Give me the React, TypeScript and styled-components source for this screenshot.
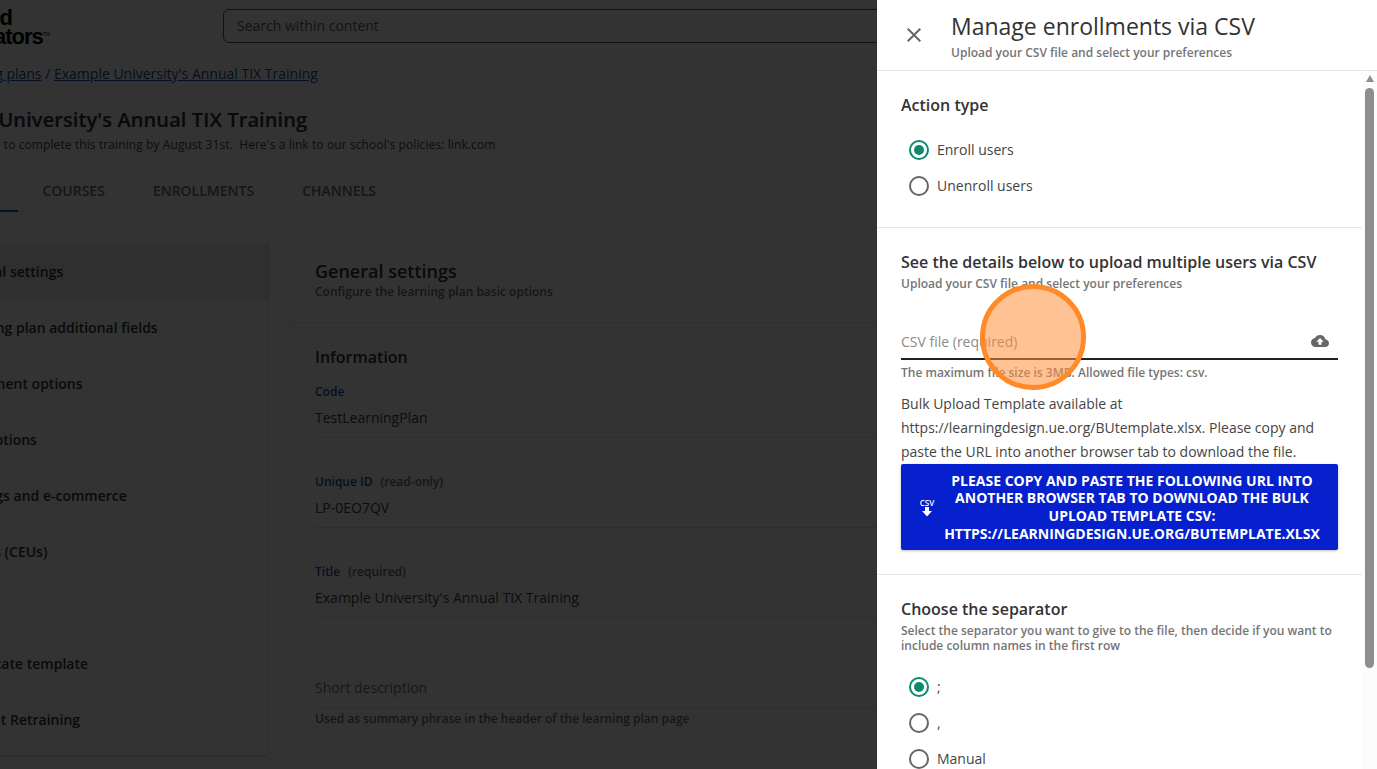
import React from "react";
import styled, { createGlobalStyle } from "styled-components";

const Global = createGlobalStyle`
  html, body { margin: 0; padding: 0; height: 100%; background: #fff; }
  body { font-family: "Open Sans", "Noto Sans", sans-serif; color: #333; overflow: hidden; }
  #root { height: 100%; }
  * { box-sizing: border-box; }
`;

const Viewport = styled.div`
  position: relative;
  width: 1377px;
  height: 769px;
  overflow: hidden;
`;

const Page = styled.div`
  width: 1500px;
  margin-left: -92px;
`;

const TopBar = styled.header`
  height: 51px;
  display: flex;
  align-items: flex-start;
`;

const Logo = styled.div`
  width: 315px;
  flex: none;
  padding-top: 8px;
  display: flex;
  flex-direction: column;
  align-items: flex-end;
  padding-right: 173px;
  font-family: "Liberation Sans", Arial, sans-serif;
  font-weight: 700;
  font-size: 22px;
  line-height: 19px;
  letter-spacing: -1px;
  color: #000;
`;

const LogoLine = styled.span<{ $inset?: number }>`
  white-space: nowrap;
  margin-right: ${(p) => p.$inset ?? 0}px;
`;

const LogoMark = styled.sup`
  font-size: 5px;
  line-height: 0;
  letter-spacing: 0;
  font-weight: 400;
`;

const Search = styled.div`
  margin-top: 9px;
  width: 1000px;
  height: 34px;
  border: 1px solid #555;
  border-radius: 6px;
  padding-left: 13px;
  font-size: 14px;
  line-height: 32px;
  color: #666;
`;

const Breadcrumb = styled.nav`
  padding: 13px 0 0 22px;
  height: 55px;
  font-size: 14px;
  line-height: 20px;
  color: #444;
`;

const Crumb = styled.a`
  color: #1553a5;
  text-decoration: underline;
`;

const Heading = styled.h1`
  margin: 0;
  padding-left: 2px;
  font-size: 20px;
  line-height: 28px;
  font-weight: 600;
  letter-spacing: 0.1px;
  color: #333;
  -webkit-text-stroke: 0.2px #333;
`;

const Lead = styled.p`
  margin: 2px 0 0;
  padding-left: 10px;
  height: 34px;
  font-size: 12px;
  line-height: 18px;
  letter-spacing: 0.1px;
  color: #444;
`;

const Tabs = styled.div`
  display: flex;
  align-items: stretch;
  height: 42px;
  margin-left: -2px;
  border-top: 1px solid #e8e8e8;
  border-bottom: 1px solid #e8e8e8;
`;

const Tab = styled.div<{ $active?: boolean }>`
  padding: 0 24px;
  font-size: 14px;
  font-weight: 600;
  line-height: 39px;
  color: #707070;
  text-transform: uppercase;
  border-bottom: 2px solid ${(p) => (p.$active ? "#0465ac" : "transparent")};
  height: 41px;
`;

const Columns = styled.div`
  display: flex;
  align-items: flex-start;
  gap: 23px;
  padding-top: 24px;
`;

const Side = styled.aside`
  width: 360px;
  flex: none;
  padding: 8px 0 7px;
  box-shadow: 0 1px 3px rgba(0, 0, 0, 0.2);
`;

const SideItem = styled.div<{ $active?: boolean }>`
  height: 56px;
  padding-left: 45px;
  font-size: 14px;
  font-weight: 600;
  line-height: 56px;
  color: #333;
  white-space: nowrap;
  background: ${(p) => (p.$active ? "#ececec" : "transparent")};
`;

const Main = styled.main`
  flex: 1;
  min-width: 0;
  box-shadow: 0 1px 3px rgba(0, 0, 0, 0.2);
`;

const MainHead = styled.div`
  height: 87px;
  padding: 22px 24px 0;
  border-bottom: 1px solid #e4e4e4;
`;

const MainTitle = styled.h2`
  margin: 0;
  font-size: 18px;
  line-height: 26px;
  font-weight: 600;
  color: #333;
`;

const MainSub = styled.div`
  font-size: 12px;
  font-weight: 600;
  line-height: 15px;
  color: #707070;
`;

const MainBody = styled.div`
  padding: 23px 24px 40px;
`;

const InfoTitle = styled.h3`
  margin: 0 0 15px;
  font-size: 16px;
  line-height: 22px;
  font-weight: 600;
  color: #333;
`;

const Field = styled.div<{ $gap?: number }>`
  margin-bottom: ${(p) => p.$gap ?? 36}px;
`;

const FieldLabel = styled.div`
  font-size: 12px;
  font-weight: 600;
  line-height: 18px;
  color: #1553a5;
`;

const Muted = styled.span`
  font-weight: 600;
  color: #707070;
  margin-left: 8px;
`;

const FieldValue = styled.div<{ $placeholder?: boolean }>`
  height: 37px;
  padding-top: 7px;
  font-size: 14px;
  line-height: 20px;
  color: ${(p) => (p.$placeholder ? "#777" : "#444")};
  border-bottom: 1px solid #e0e0e0;
`;

const FieldHelp = styled.div`
  margin-top: 2px;
  font-size: 12px;
  font-weight: 600;
  line-height: 18px;
  color: #707070;
`;

const Scrim = styled.div`
  position: absolute;
  inset: 0;
  background: rgba(0, 0, 0, 0.8);
`;

const Drawer = styled.aside`
  position: absolute;
  top: 0;
  right: 0;
  bottom: 0;
  width: 500px;
  background: #fff;
  display: flex;
  flex-direction: column;
`;

const DrawerHead = styled.div`
  height: 71px;
  flex: none;
  display: flex;
  border-bottom: 1px solid #e4e4e4;
  padding-top: 9px;
`;

const Close = styled.button`
  width: 74px;
  height: 52px;
  flex: none;
  border: 0;
  background: none;
  padding: 0 1px 0 0;
  display: flex;
  align-items: center;
  justify-content: center;
  color: #666;
`;

const DrawerTitle = styled.h2`
  margin: -1px 0 0;
  font-size: 23px;
  font-weight: 400;
  line-height: 36px;
  color: #333;
`;

const DrawerSub = styled.div`
  margin-top: 1px;
  font-size: 12px;
  font-weight: 600;
  line-height: 16px;
  color: #757575;
`;

const DrawerBody = styled.div`
  flex: 1;
  min-height: 0;
  display: flex;
  overflow: hidden;
`;

const Content = styled.div`
  width: 485px;
  flex: none;
`;

const Section = styled.section<{ $h?: number }>`
  padding: 0 24px;
  height: ${(p) => (p.$h ? `${p.$h}px` : "auto")};
  border-bottom: 1px solid #e8e8e8;
  &:last-child { border-bottom: 0; }
`;

const SectionTitle = styled.h3<{ $top: number }>`
  margin: 0;
  padding-top: ${(p) => p.$top}px;
  font-size: 16px;
  line-height: 24px;
  font-weight: 600;
  color: #333;
`;

const SectionSub = styled.div`
  font-size: 12px;
  font-weight: 600;
  line-height: 15px;
  color: #757575;
  margin-top: 2px;
`;

const RadioGroup = styled.div<{ $top: number }>`
  display: flex;
  flex-direction: column;
  gap: 16px;
  padding: ${(p) => p.$top}px 0 0 8px;
`;

const RadioRow = styled.label`
  display: flex;
  align-items: center;
  gap: 8px;
  height: 20px;
  font-size: 14px;
  line-height: 20px;
  color: #444;
`;

const RadioMark = styled.span<{ $on?: boolean }>`
  width: 20px;
  height: 20px;
  flex: none;
  border-radius: 50%;
  border: 2px solid ${(p) => (p.$on ? "#0b8a6f" : "#666")};
  display: flex;
  align-items: center;
  justify-content: center;
  &::after {
    content: "";
    width: 10px;
    height: 10px;
    border-radius: 50%;
    background: ${(p) => (p.$on ? "#0b8a6f" : "transparent")};
  }
`;

const FileField = styled.div`
  margin-top: 32px;
  height: 37px;
  display: flex;
  align-items: center;
  justify-content: space-between;
  padding: 1px 9px 0 0;
  border-bottom: 2px solid #222;
  font-size: 14px;
  color: #8a8a8a;
`;

const Hint = styled.div`
  margin-top: 5px;
  font-size: 12px;
  font-weight: 600;
  line-height: 15px;
  color: #757575;
`;

const Paragraph = styled.p`
  margin: 12px 0 0;
  font-size: 14px;
  line-height: 24px;
  color: #444;
`;

const DownloadButton = styled.div`
  height: 86px;
  display: flex;
  align-items: center;
  padding: 0 17px 0 17px;
  gap: 7px;
  background: #0520cc;
  border-radius: 2px;
  box-shadow: 0 1px 3px rgba(0, 0, 0, 0.25);
  color: #fff;
`;

const CsvIcon = styled.div`
  flex: none;
  width: 18px;
  padding-top: 2px;
  display: flex;
  flex-direction: column;
  align-items: center;
  font-size: 8px;
  font-weight: 600;
  line-height: 8px;
`;

const ButtonLabel = styled.div`
  flex: 1;
  text-align: center;
  font-size: 14px;
  font-weight: 700;
  line-height: 17.6px;
  text-transform: uppercase;
`;

const ScrollTrack = styled.div`
  width: 15px;
  flex: none;
  display: flex;
  flex-direction: column;
  align-items: center;
  padding: 4px 3px 0 3px;
  background: #fcfcfc;
`;

const ScrollArrow = styled.div`
  width: 0;
  height: 0;
  border-left: 4px solid transparent;
  border-right: 4px solid transparent;
  border-bottom: 7px solid #8e8e8e;
`;

const ScrollThumb = styled.div`
  margin-top: 6px;
  width: 9px;
  height: 580px;
  border-radius: 5px;
  background: #8e8e8e;
`;

const Pointer = styled.div`
  position: absolute;
  left: 980px;
  top: 284px;
  width: 106px;
  height: 106px;
  border-radius: 50%;
  border: 5px solid #ff8a27;
  background: rgba(255, 143, 60, 0.55);
`;

const sideItems = [
  "General settings",
  "Learning plan additional fields",
  "Enrollment options",
  "Paid options",
  "Postings and e-commerce",
  "Credits (CEUs)",
  "Tags",
  "Certificate template",
  "Student Retraining",
];

export default function App() {
  return (
    <Viewport>
      <Global />
      <Page>
        <TopBar>
          <Logo>
            <LogoLine $inset={38}>Trained</LogoLine>
            <LogoLine>Educators<LogoMark>TM</LogoMark></LogoLine>
          </Logo>
          <Search>Search within content</Search>
        </TopBar>
        <Breadcrumb>
          <Crumb>All learning plans</Crumb> / <Crumb>Example University's Annual TIX Training</Crumb>
        </Breadcrumb>
        <Heading>Example University's Annual TIX Training</Heading>
        <Lead>Please be sure to complete this training by August 31st.&nbsp; Here's a link to our school's policies: link.com</Lead>
        <Tabs>
          <Tab $active>Settings</Tab>
          <Tab>Courses</Tab>
          <Tab>Enrollments</Tab>
          <Tab>Channels</Tab>
        </Tabs>
        <Columns>
          <Side>
            {sideItems.map((item, i) => (
              <SideItem key={item} $active={i === 0}>{item}</SideItem>
            ))}
          </Side>
          <Main>
            <MainHead>
              <MainTitle>General settings</MainTitle>
              <MainSub>Configure the learning plan basic options</MainSub>
            </MainHead>
            <MainBody>
              <InfoTitle>Information</InfoTitle>
              <Field $gap={35}>
                <FieldLabel>Code</FieldLabel>
                <FieldValue>TestLearningPlan</FieldValue>
              </Field>
              <Field $gap={35}>
                <FieldLabel>Unique ID<Muted>(read-only)</Muted></FieldLabel>
                <FieldValue>LP-0EO7QV</FieldValue>
              </Field>
              <Field $gap={53}>
                <FieldLabel>Title<Muted>(required)</Muted></FieldLabel>
                <FieldValue>Example University's Annual TIX Training</FieldValue>
              </Field>
              <Field>
                <FieldValue $placeholder>Short description</FieldValue>
                <FieldHelp>Used as summary phrase in the header of the learning plan page</FieldHelp>
              </Field>
            </MainBody>
          </Main>
        </Columns>
      </Page>
      <Scrim />
      <Drawer>
        <DrawerHead>
          <Close aria-label="Close">
            <svg width="24" height="24" viewBox="0 0 24 24" fill="currentColor">
              <path d="M19 6.41 17.59 5 12 10.59 6.41 5 5 6.41 10.59 12 5 17.59 6.41 19 12 13.41 17.59 19 19 17.59 13.41 12z" />
            </svg>
          </Close>
          <div>
            <DrawerTitle>Manage enrollments via CSV</DrawerTitle>
            <DrawerSub>Upload your CSV file and select your preferences</DrawerSub>
          </div>
        </DrawerHead>
        <DrawerBody>
          <Content>
            <Section $h={157}>
              <SectionTitle $top={22}>Action type</SectionTitle>
              <RadioGroup $top={23}>
                <RadioRow><RadioMark $on />Enroll users</RadioRow>
                <RadioRow><RadioMark />Unenroll users</RadioRow>
              </RadioGroup>
            </Section>
            <Section $h={347}>
              <SectionTitle $top={22}>See the details below to upload multiple users via CSV</SectionTitle>
              <SectionSub>Upload your CSV file and select your preferences</SectionSub>
              <FileField>
                CSV file (required)
                <svg width="18" height="18" viewBox="0 0 24 24" fill="#666">
                  <path d="M19.35 10.04C18.67 6.59 15.64 4 12 4 9.11 4 6.6 5.64 5.35 8.04 2.34 8.36 0 10.91 0 14c0 3.31 2.69 6 6 6h13c2.76 0 5-2.24 5-5 0-2.64-2.05-4.78-4.65-4.96zM14 13v4h-4v-4H7l5-5 5 5h-3z" />
                </svg>
              </FileField>
              <Hint>The maximum file size is 3MB. Allowed file types: csv.</Hint>
              <Paragraph>
                Bulk Upload Template available at https://learningdesign.ue.org/BUtemplate.xlsx. Please copy and paste the URL into another browser tab to download the file.
              </Paragraph>
              <DownloadButton>
                <CsvIcon>
                  CSV
                  <svg width="12" height="10" viewBox="0 0 12 10" fill="#fff">
                    <path d="M4 0h4v4h3L6 9.5 1 4h3z" />
                  </svg>
                </CsvIcon>
                <ButtonLabel>
                  Please copy and paste the following URL into another browser tab to download the bulk upload template CSV: https://learningdesign.ue.org/BUtemplate.xlsx
                </ButtonLabel>
              </DownloadButton>
            </Section>
            <Section>
              <SectionTitle $top={22}>Choose the separator</SectionTitle>
              <SectionSub>Select the separator you want to give to the file, then decide if you want to include column names in the first row</SectionSub>
              <RadioGroup $top={24}>
                <RadioRow><RadioMark $on />;</RadioRow>
                <RadioRow><RadioMark />,</RadioRow>
                <RadioRow><RadioMark />Manual</RadioRow>
              </RadioGroup>
            </Section>
          </Content>
          <ScrollTrack>
            <ScrollArrow />
            <ScrollThumb />
          </ScrollTrack>
        </DrawerBody>
      </Drawer>
      <Pointer />
    </Viewport>
  );
}
